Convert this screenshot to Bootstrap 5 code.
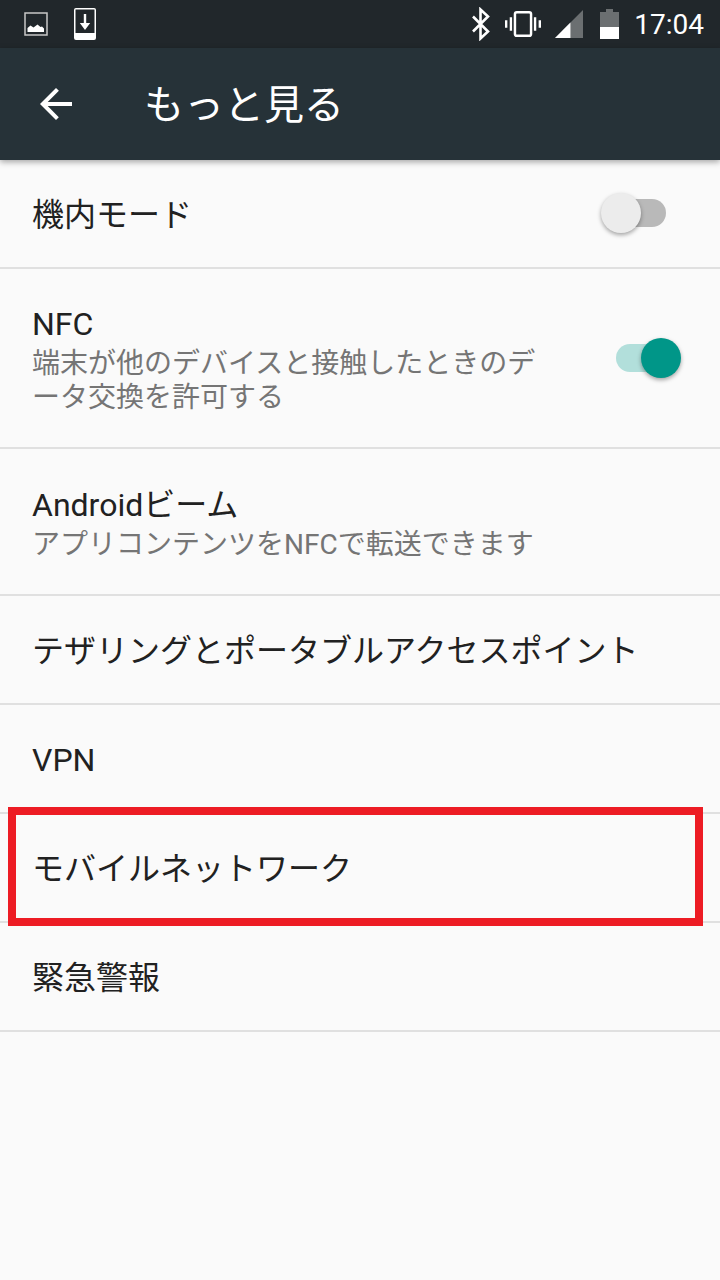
<!DOCTYPE html>
<html lang="ja">
<head>
    <meta charset="UTF-8">
    <meta name="viewport" content="width=device-width, initial-scale=1.0">
    <title>もっと見る</title>
    <link href="https://cdn.jsdelivr.net/npm/bootstrap@5.3.2/dist/css/bootstrap.min.css" rel="stylesheet">
    <style>
        html, body { height: 100%; }
        body { background: #fafafa; width: 720px; min-height: 1280px; font-family: Roboto, "Noto Sans CJK JP", sans-serif; color: #212121; overflow: hidden; }
        .status-strip { height: 48px; background: #21272b; color: #fff; padding: 0 16px 0 24px; }
        .status-time { font-size: 28px; line-height: 48px; font-family: Roboto, sans-serif; margin-left: 15px; padding-top: 1px; }
        .dl-icon { margin-left: 26px; }
        .gap-vib { margin-right: 14px; }
        .gap-sig { margin-right: 17px; }
        .app-strip { height: 112px; background: #263238; color: #fff; box-shadow: 0 2px 6px rgba(0,0,0,.35); position: relative; z-index: 2; padding-left: 40px; }
        .app-title { font-size: 40px; line-height: 1; margin: 4px 0 0 72px; font-weight: 400; }
        .setting-row { border-bottom: 2px solid #e0e0e0; padding: 2px 32px 0; display: flex; align-items: center; justify-content: space-between; position: relative; }
        .h109 { height: 109px; }
        .h180 { height: 180px; padding-top: 4px; }
        .h147 { height: 147px; padding-top: 4px; }
        .row-name { font-size: 32px; line-height: 38px; }
        .row-sub { font-size: 28px; line-height: 34px; color: #757575; width: 510px; margin-top: 4px; }
        .toggle-track { width: 50px; height: 28px; border-radius: 14px; position: relative; flex: none; margin-right: 22px; }
        .toggle-knob { width: 40px; height: 40px; border-radius: 50%; position: absolute; top: -6px; box-shadow: 0 2px 4px rgba(0,0,0,.35); }
        .toggle-off { background: #b9b9b9; margin-bottom: 3px; }
        .toggle-off .toggle-knob { background: #ececec; left: -15px; }
        .toggle-on { background: #b2dfdb; margin-bottom: 4px; }
        .toggle-on .toggle-knob { background: #009688; right: -15px; }
        .red-frame { position: absolute; left: 8px; top: -7px; width: 695px; height: 119px; border: 8px solid #ed1c24; pointer-events: none; }
    </style>
</head>
<body>
    <div class="status-strip d-flex align-items-center">
        <svg width="24" height="24" viewBox="0 0 24 24">
            <rect x="1" y="1" width="22" height="22" fill="none" stroke="#c8c8c8" stroke-width="1.500"/>
            <path d="M3.500 20v-4l3-2.500 3 2 4-3 3 2.500 1.500-.5 2 2v3.500z" fill="#fff"/>
        </svg>
        <svg width="22" height="32" viewBox="0 0 22 32" class="dl-icon">
            <path d="M2 0h18a2 2 0 0 1 2 2v28a2 2 0 0 1-2 2H2a2 2 0 0 1-2-2V2a2 2 0 0 1 2-2zm-.500 1.500V25h19V1.500z" fill="#fff"/>
            <path d="M9.800 6h2.400v9h4l-5.200 7-5.200-7h4z" fill="#fff"/>
        </svg>
        <div class="ms-auto d-flex align-items-center">
            <svg width="20" height="34" viewBox="0 0 20 34" class="gap-vib">
                <path d="M2 9.500l15 15-7.500 7V2.500l7.500 7-15 15" fill="none" stroke="#fff" stroke-width="2.600"/>
            </svg>
            <svg width="36" height="28" viewBox="0 0 38 28" class="gap-vib">
                <rect x="10.500" y="1.500" width="17" height="25" rx="2" fill="none" stroke="#fff" stroke-width="2.600"/>
                <path d="M5 7h2.500v14H5zM0 10h2.500v8H0zM30.500 7H33v14h-2.500zM35.500 10H38v8h-2.500z" fill="#fff"/>
            </svg>
            <svg width="28" height="28" viewBox="0 0 29 29" class="gap-sig">
                <path d="M0 29L29 0v29z" fill="#6b6f71"/>
                <path d="M0 29l16-16v16z" fill="#fff"/>
            </svg>
            <svg width="19" height="30" viewBox="0 0 19 30">
                <path d="M6 0h7v3h6v27H0V3h6z" fill="#6b6f71"/>
                <path d="M0 18h19v12H0z" fill="#fff"/>
            </svg>
            <span class="status-time">17:04</span>
        </div>
    </div>

    <div class="app-strip d-flex align-items-center">
        <svg width="32" height="32" viewBox="0 0 32 32">
            <path d="M32 14H7.700L18.900 2.800 16 0 0 16l16 16 2.800-2.800L7.700 18H32z" fill="#fff"/>
        </svg>
        <h1 class="app-title">もっと見る</h1>
    </div>

    <div class="setting-row h109">
        <span class="row-name">機内モード</span>
        <div class="toggle-track toggle-off"><div class="toggle-knob"></div></div>
    </div>
    <div class="setting-row h180">
        <div>
            <div class="row-name">NFC</div>
            <div class="row-sub">端末が他のデバイスと接触したときのデータ交換を許可する</div>
        </div>
        <div class="toggle-track toggle-on"><div class="toggle-knob"></div></div>
    </div>
    <div class="setting-row h147">
        <div>
            <div class="row-name">Androidビーム</div>
            <div class="row-sub">アプリコンテンツをNFCで転送できます</div>
        </div>
    </div>
    <div class="setting-row h109"><span class="row-name">テザリングとポータブルアクセスポイント</span></div>
    <div class="setting-row h109"><span class="row-name">VPN</span></div>
    <div class="setting-row h109">
        <span class="row-name">モバイルネットワーク</span>
        <div class="red-frame"></div>
    </div>
    <div class="setting-row h109"><span class="row-name">緊急警報</span></div>
</body>
</html>
